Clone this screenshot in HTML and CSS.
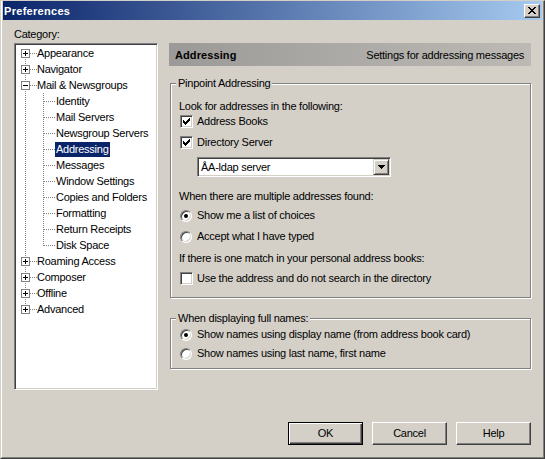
FILE: index.html
```html
<!DOCTYPE html>
<html>
<head>
<meta charset="utf-8">
<title>Preferences</title>
<link rel="stylesheet" href="styles.css">
</head>
<body>
<div class="window">
  <div class="frame">
    <div class="titlebar">
      <span class="title">Preferences</span>
      <span class="close">
        <svg width="8" height="7" viewBox="0 0 8 7" shape-rendering="crispEdges"><path fill="#000" d="M0 0h2v1H0z M6 0h2v1H6z M1 1h2v1H1z M5 1h2v1H5z M2 2h4v1H2z M3 3h2v1H3z M2 4h4v1H2z M1 5h2v1H1z M5 5h2v1H5z M0 6h2v1H0z M6 6h2v1H6z"/></svg>
      </span>
    </div>
    <div class="body">
      <div class="prefs">
        <div class="cat-label">Category:</div>
        <ul class="tree">
          <li class="row top first"><span class="tw plus"></span><span class="lbl">Appearance</span></li>
          <li class="row top"><span class="tw plus"></span><span class="lbl">Navigator</span></li>
          <li class="row top"><span class="tw minus"></span><span class="lbl">Mail &amp; Newsgroups</span></li>
          <li class="row child"><span class="lbl">Identity</span></li>
          <li class="row child"><span class="lbl">Mail Servers</span></li>
          <li class="row child"><span class="lbl">Newsgroup Servers</span></li>
          <li class="row child"><span class="lbl selected">Addressing</span></li>
          <li class="row child"><span class="lbl">Messages</span></li>
          <li class="row child"><span class="lbl">Window Settings</span></li>
          <li class="row child"><span class="lbl">Copies and Folders</span></li>
          <li class="row child"><span class="lbl">Formatting</span></li>
          <li class="row child"><span class="lbl">Return Receipts</span></li>
          <li class="row child last"><span class="lbl">Disk Space</span></li>
          <li class="row top"><span class="tw plus"></span><span class="lbl">Roaming Access</span></li>
          <li class="row top"><span class="tw plus"></span><span class="lbl">Composer</span></li>
          <li class="row top"><span class="tw plus"></span><span class="lbl">Offline</span></li>
          <li class="row top last"><span class="tw plus"></span><span class="lbl">Advanced</span></li>
        </ul>
        <div class="panel">
          <div class="panel-header">
            <span class="ph-title">Addressing</span>
            <span class="ph-desc">Settings for addressing messages</span>
          </div>
          <div class="group g-pinpoint">
            <div class="legend">Pinpoint Addressing</div>
            <div class="txt s-look">Look for addresses in the following:</div>
            <div class="opt s-cb1"><span class="cb"><svg width="11" height="11" viewBox="0 0 11 11" shape-rendering="crispEdges"><path fill="#000" d="M2 4h1v3H2z M3 5h1v3H3z M4 6h1v3H4z M5 5h1v3H5z M6 4h1v3H6z M7 3h1v3H7z M8 2h1v3H8z"/></svg></span><span>Address Books</span></div>
            <div class="opt s-cb2"><span class="cb"><svg width="11" height="11" viewBox="0 0 11 11" shape-rendering="crispEdges"><path fill="#000" d="M2 4h1v3H2z M3 5h1v3H3z M4 6h1v3H4z M5 5h1v3H5z M6 4h1v3H6z M7 3h1v3H7z M8 2h1v3H8z"/></svg></span><span>Directory Server</span></div>
            <div class="combo s-combo">
              <span class="combo-text">ÅA-ldap server</span>
              <span class="combo-btn"><svg width="7" height="4" viewBox="0 0 7 4" shape-rendering="crispEdges"><path fill="#000" d="M0 0h7v1H0z M1 1h5v1H1z M2 2h3v1H2z M3 3h1v1H3z"/></svg></span>
            </div>
            <div class="txt s-when">When there are multiple addresses found:</div>
            <div class="opt radio-opt s-r1"><span class="radio on"></span><span>Show me a list of choices</span></div>
            <div class="opt radio-opt s-r2"><span class="radio"></span><span>Accept what I have typed</span></div>
            <div class="txt s-if">If there is one match in your personal address books:</div>
            <div class="opt s-cb3"><span class="cb"></span><span>Use the address and do not search in the directory</span></div>
          </div>
          <div class="group g-names">
            <div class="legend">When displaying full names:</div>
            <div class="opt radio-opt s-n1"><span class="radio on"></span><span>Show names using display name (from address book card)</span></div>
            <div class="opt radio-opt s-n2"><span class="radio"></span><span>Show names using last name, first name</span></div>
          </div>
        </div>
      </div>
      <div class="buttons">
        <span class="btn default">OK</span>
        <span class="btn">Cancel</span>
        <span class="btn">Help</span>
      </div>
    </div>
  </div>
</div>
</body>
</html>
```

FILE: styles.css
```css
html, body {
  margin: 0;
  padding: 0;
}
body {
  background: #d4d0c8;
  font-family: "Liberation Sans", Arial, sans-serif;
  font-size: 11px;
  letter-spacing: -0.25px;
  color: #000;
}

.window {
  width: 545px;
  height: 459px;
  box-sizing: border-box;
  border: 1px solid;
  border-color: #d4d0c8 #404040 #404040 #d4d0c8;
}
.frame {
  height: 100%;
  box-sizing: border-box;
  border-style: solid;
  border-width: 0 1px 1px 1px;
  border-color: #fff #808080 #808080 #fff;
  padding: 0 1px 1px 1px;
  display: flex;
  flex-direction: column;
}

.titlebar {
  height: 19px;
  flex: none;
  display: flex;
  align-items: center;
  justify-content: space-between;
  padding: 0 2px 0 1px;
  background: linear-gradient(to right, #0a246a, #a6caf0);
}
.title {
  color: #fff;
  font-weight: bold;
  font-size: 11px;
  letter-spacing: 0.3px;
  padding-top: 1px;
}
.close {
  width: 16px;
  height: 14px;
  box-sizing: border-box;
  background: #d4d0c8;
  border: 1px solid;
  border-color: #fff #404040 #404040 #fff;
  box-shadow: inset -1px -1px #808080;
  display: flex;
  align-items: center;
  justify-content: center;
}
.close svg {
  display: block;
  margin: 0 1px 1px 0;
}

.body {
  flex: 1;
  padding: 8px 11px 11px 11px;
  display: flex;
  flex-direction: column;
}

.prefs {
  display: grid;
  grid-template-columns: 144px 362px;
  grid-template-rows: 15px 347px;
  column-gap: 11px;
}
.cat-label {
  grid-column: 1;
  grid-row: 1;
  line-height: 13px;
  height: 13px;
}

/* tree */
.tree {
  grid-column: 1;
  grid-row: 2;
  list-style: none;
  margin: 0;
  padding: 1px;
  box-sizing: border-box;
  background: #fff;
  border: 1px solid;
  border-color: #808080 #fff #fff #808080;
  box-shadow: inset 1px 1px #404040, inset -1px -1px #d4d0c8;
}
.row {
  height: 16px;
  display: flex;
  align-items: flex-start;
  white-space: nowrap;
  background-repeat: no-repeat;
}
.row.top {
  background-image:
    repeating-linear-gradient(to right, #808080 0 1px, transparent 1px 2px),
    repeating-linear-gradient(to bottom, #808080 0 1px, transparent 1px 2px);
  background-position: 14px 8px, 9px 0;
  background-size: 7px 1px, 1px 16px;
}
.row.top.first {
  background-position: 14px 8px, 9px 8px;
  background-size: 7px 1px, 1px 8px;
}
.row.top.last {
  background-position: 14px 8px, 9px 0;
  background-size: 7px 1px, 1px 8px;
}
.row.child {
  background-image:
    repeating-linear-gradient(to right, #808080 0 1px, transparent 1px 2px),
    repeating-linear-gradient(to bottom, #808080 0 1px, transparent 1px 2px),
    repeating-linear-gradient(to bottom, #808080 0 1px, transparent 1px 2px);
  background-position: 28px 8px, 27px 0, 9px 0;
  background-size: 11px 1px, 1px 16px, 1px 16px;
}
.row.child.last {
  background-size: 11px 1px, 1px 9px, 1px 16px;
}
.tw {
  flex: none;
  width: 9px;
  height: 9px;
  box-sizing: border-box;
  margin: 4px 0 0 5px;
  border: 1px solid #808080;
  background-color: #fff;
  background-repeat: no-repeat;
}
.tw.plus {
  background-image: linear-gradient(#000, #000), linear-gradient(#000, #000);
  background-position: 1px 3px, 3px 1px;
  background-size: 5px 1px, 1px 5px;
}
.tw.minus {
  background-image: linear-gradient(#000, #000);
  background-position: 1px 3px;
  background-size: 5px 1px;
}
.lbl {
  line-height: 15px;
  height: 15px;
  margin-top: 1px;
  padding: 0 1px;
}
.row.top .lbl {
  margin-left: 6px;
}
.row.child .lbl {
  margin-left: 39px;
}
.lbl.selected {
  background: #0a246a;
  color: #fff;
}

/* right panel */
.panel {
  grid-column: 2;
  grid-row: 2;
  display: flex;
  flex-direction: column;
}
.panel-header {
  height: 23px;
  flex: none;
  display: flex;
  align-items: center;
  justify-content: space-between;
  padding: 0 7px 0 6px;
  background: linear-gradient(to right, #9c9a98, #bdbab5);
}
.ph-title {
  font-weight: bold;
  letter-spacing: 0.1px;
}

.group {
  margin-left: 1px;
  border: 1px solid #808080;
  box-shadow: inset 1px 1px #fff, 1px 1px #fff;
  padding: 0 8px;
  display: flex;
  flex-direction: column;
  align-items: flex-start;
}
.g-pinpoint {
  margin-top: 17px;
  padding-bottom: 12px;
}
.g-names {
  margin-top: 20px;
  padding-bottom: 8px;
}
.legend {
  margin: -7px 0 0 -3px;
  padding: 0 2px;
  line-height: 13px;
  height: 13px;
  background: #d4d0c8;
}
.txt {
  line-height: 13px;
  height: 13px;
}
.opt {
  height: 13px;
  line-height: 13px;
  display: flex;
  align-items: center;
  gap: 4px;
  white-space: nowrap;
}
.opt.radio-opt {
  gap: 5px;
}
.cb {
  flex: none;
  width: 13px;
  height: 13px;
  box-sizing: border-box;
  margin-left: 1px;
  background: #fff;
  border: 1px solid;
  border-color: #808080 #fff #fff #808080;
  box-shadow: inset 1px 1px #404040, inset -1px -1px #d4d0c8;
}
.cb svg {
  display: block;
}
.radio {
  flex: none;
  width: 12px;
  height: 12px;
  box-sizing: border-box;
  margin-left: 1px;
  border-radius: 50%;
  background: #fff;
  border: 1px solid;
  border-color: #808080 #fff #fff #808080;
  box-shadow: inset 1px 1px #404040, inset -1px -1px #d4d0c8;
  display: flex;
  align-items: center;
  justify-content: center;
}
.radio.on::after {
  content: "";
  width: 4px;
  height: 4px;
  border-radius: 50%;
  background: #000;
}

.s-look { margin-top: 10px; }
.s-cb1 { margin-top: 2px; }
.s-cb2 { margin-top: 8px; }
.s-combo { margin-top: 8px; }
.s-when { margin-top: 13px; }
.s-r1 { margin-top: 6px; }
.s-r2 { margin-top: 8px; }
.s-if { margin-top: 9px; }
.s-cb3 { margin-top: 7px; }
.s-n1 { margin-top: 3px; }
.s-n2 { margin-top: 6px; }

.combo {
  margin-left: 18px;
  width: 194px;
  height: 20px;
  box-sizing: border-box;
  background: #fff;
  border: 1px solid;
  border-color: #808080 #fff #fff #808080;
  box-shadow: inset 1px 1px #404040, inset -1px -1px #d4d0c8;
  padding: 1px;
  display: flex;
  align-items: center;
}
.combo-text {
  flex: 1;
  padding-left: 2px;
  line-height: 13px;
}
.combo-btn {
  flex: none;
  width: 16px;
  height: 16px;
  box-sizing: border-box;
  background: #d4d0c8;
  border: 1px solid;
  border-color: #d4d0c8 #404040 #404040 #d4d0c8;
  box-shadow: inset 1px 1px #fff, inset -1px -1px #808080;
  display: flex;
  align-items: center;
  justify-content: center;
}
.combo-btn svg {
  display: block;
}

/* buttons */
.buttons {
  margin-top: 32px;
  display: flex;
  justify-content: flex-end;
  gap: 9px;
}
.btn {
  width: 75px;
  height: 23px;
  box-sizing: border-box;
  background: #d4d0c8;
  border: 1px solid;
  border-color: #fff #404040 #404040 #fff;
  box-shadow: inset -1px -1px #808080;
  display: flex;
  align-items: center;
  justify-content: center;
  line-height: 13px;
}
.btn.default {
  border-color: #000;
  box-shadow: inset 1px 1px #fff, inset -1px -1px #404040, inset -2px -2px #808080;
}
```
